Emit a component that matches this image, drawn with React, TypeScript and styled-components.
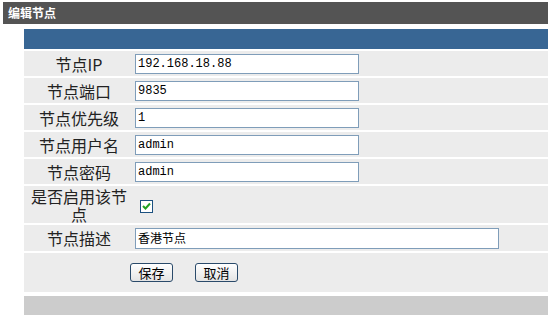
import React, { useState } from "react"
import styled, { createGlobalStyle } from "styled-components"

const GlobalStyle = createGlobalStyle`
    html, body {
        margin: 0;
        padding: 0;
        background: #fff;
        overflow: hidden;
    }
    body {
        font-family: "Noto Sans CJK SC", "Liberation Sans", sans-serif;
    }
`

const StyledPage = styled.div`
    padding-top: 2px;
    width: 548px;
    overflow: hidden;
`

const StyledTitleBar = styled.div`
    margin-left: 3px;
    height: 22px;
    line-height: 22px;
    padding-left: 5px;
    background: #545454;
    color: #fff;
    font-size: 12px;
    font-weight: 700;
`

const StyledPanel = styled.div`
    display: flex;
    flex-direction: column;
    gap: 2px;
    margin: 5px 0 0 24px;
    width: 540px;
`

const StyledHeader = styled.div`
    height: 20px;
    background: #386694;
`

const StyledRow = styled.div<{ height?: number }>`
    display: grid;
    grid-template-columns: 110px 1fr;
    align-items: center;
    min-height: ${({ height }) => height || 25}px;
    background: #ececec;
`

const StyledLabel = styled.div`
    padding: 0 5px;
    text-align: center;
    font-size: 16px;
    line-height: 18px;
    color: #222;
`

const StyledValue = styled.div`
    display: flex;
    align-items: center;
    padding-left: 1px;
`

const StyledInput = styled.input<{ wide?: boolean }>`
    box-sizing: border-box;
    width: ${({ wide }) => wide ? 364 : 224}px;
    height: ${({ wide }) => wide ? 21 : 20}px;
    margin: 0;
    padding: 0 2px;
    border: 1px solid #7f9db9;
    background: #fff;
    color: #000;
    font-family: "Liberation Mono", "Noto Sans CJK SC", monospace;
    font-size: 12px;
    outline: none;
`

const StyledCheck = styled.button<{ checked: boolean }>`
    box-sizing: border-box;
    display: flex;
    align-items: center;
    justify-content: center;
    width: 13px;
    height: 13px;
    margin: 3px 0 0 5px;
    padding: 0;
    border: 1px solid #1c5180;
    background: #fff;
    cursor: pointer;
    svg {
        visibility: ${({ checked }) => checked ? "visible" : "hidden"};
    }
`

const StyledButtonRow = styled.div`
    display: flex;
    align-items: center;
    gap: 22px;
    height: 39px;
    padding-left: 106px;
    background: #ececec;
`

const StyledButton = styled.button`
    box-sizing: border-box;
    width: 43px;
    height: 19px;
    padding: 0;
    border: 1px solid #2a4a6a;
    border-radius: 3px;
    background: linear-gradient(#ffffff, #e4e4e4);
    color: #000;
    font-family: "Noto Sans CJK SC", sans-serif;
    font-size: 13px;
    line-height: 17px;
    cursor: pointer;
`

const StyledFooter = styled.div`
    height: 24px;
    margin-top: 2px;
    background: #cccccc;
`

const TEXT_FIELDS = [
    { label: "节点IP", value: "192.168.18.88" },
    { label: "节点端口", value: "9835" },
    { label: "节点优先级", value: "1" },
    { label: "节点用户名", value: "admin" },
    { label: "节点密码", value: "admin" },
]

export default function App() {
    const [values, setValues] = useState(TEXT_FIELDS.map(f => f.value))
    const [enabled, setEnabled] = useState(true)
    const [desc, setDesc] = useState("香港节点")

    return <StyledPage>
        <GlobalStyle />
        <StyledTitleBar>编辑节点</StyledTitleBar>

        <StyledPanel>
            <StyledHeader />

            {TEXT_FIELDS.map((f, i) => {
                return <StyledRow key={f.label}>
                    <StyledLabel>{f.label}</StyledLabel>
                    <StyledValue>
                        <StyledInput
                            value={values[i]}
                            onChange={e => setValues(p => p.map((v, j) => j === i ? e.target.value : v))}
                        />
                    </StyledValue>
                </StyledRow>
            })}

            <StyledRow height={37}>
                <StyledLabel>是否启用该节点</StyledLabel>
                <StyledValue>
                    <StyledCheck checked={enabled} onClick={() => setEnabled(p => !p)}>
                        <svg width="9" height="8" viewBox="0 0 9 8">
                            <path d="M1 4 L3.5 6.5 L8 1.5" fill="none" stroke="#21a121" strokeWidth="2" />
                        </svg>
                    </StyledCheck>
                </StyledValue>
            </StyledRow>

            <StyledRow height={26}>
                <StyledLabel>节点描述</StyledLabel>
                <StyledValue>
                    <StyledInput wide value={desc} onChange={e => setDesc(e.target.value)} />
                </StyledValue>
            </StyledRow>

            <StyledButtonRow>
                <StyledButton>保存</StyledButton>
                <StyledButton>取消</StyledButton>
            </StyledButtonRow>

            <StyledFooter />
        </StyledPanel>
    </StyledPage>
}
